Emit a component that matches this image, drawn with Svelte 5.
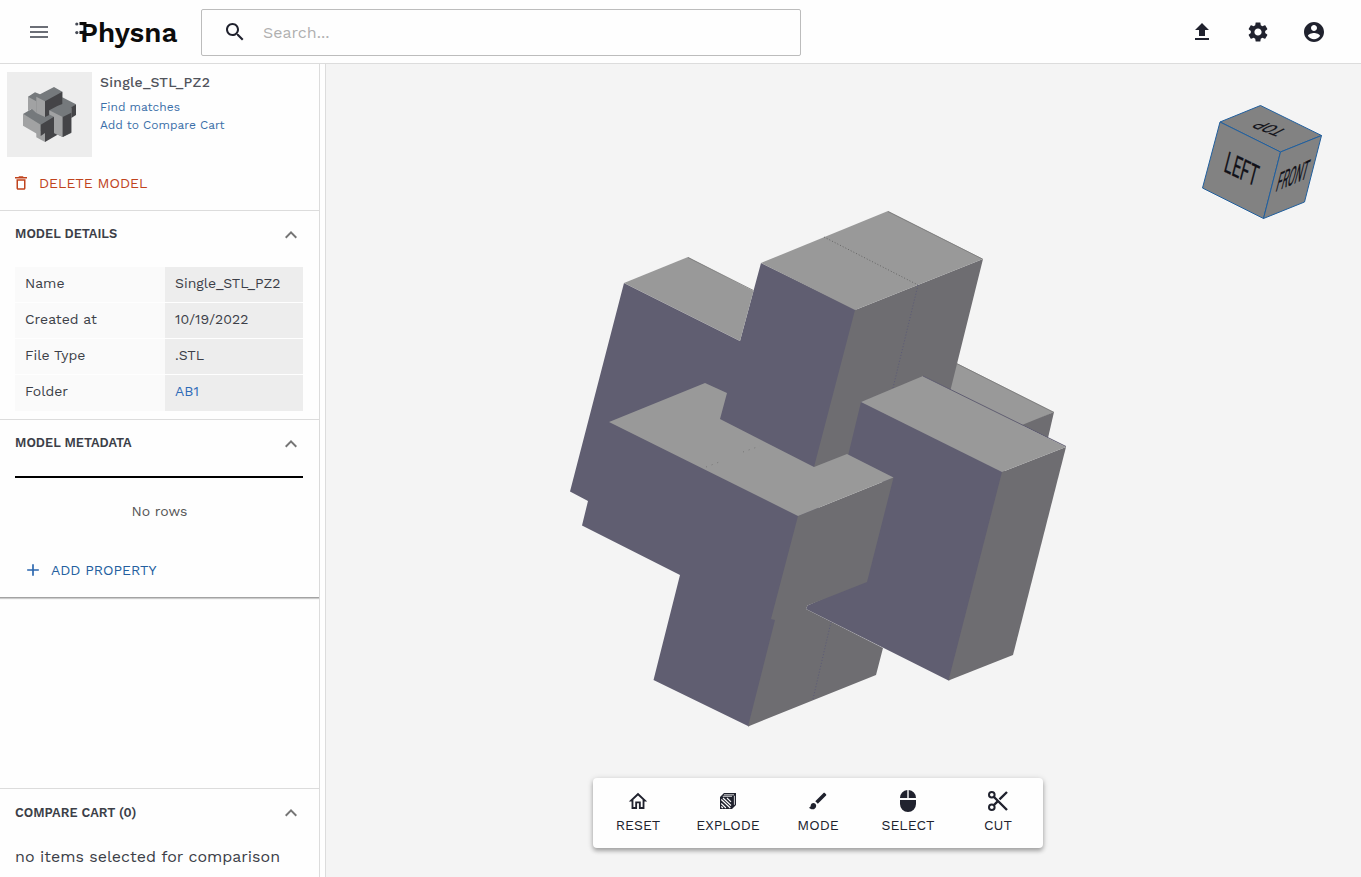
<script>
  const details = [
    { label: 'Name', value: 'Single_STL_PZ2' },
    { label: 'Created at', value: '10/19/2022' },
    { label: 'File Type', value: '.STL' },
    { label: 'Folder', value: 'AB1', link: true }
  ];
  const tools = ['RESET', 'EXPLODE', 'MODE', 'SELECT', 'CUT'];
</script>

{#snippet chevron()}
  <svg class="chevron" width="24" height="24" viewBox="0 0 24 24"><path fill="#757575" d="M12 8l-6 6 1.41 1.41L12 10.83l4.59 4.58L18 14z" /></svg>
{/snippet}

{#snippet toolIcon(name)}
  <svg class="tool-icon" width="24" height="24" viewBox="0 0 24 24" fill="#20222e">
    {#if name === 'RESET'}
      <g transform="translate(.96 1) scale(.92 .95)"><path d="M12 5.69l5 4.5V18h-2v-6H9v6H7v-7.81l5-4.5M12 3L2 12h3v8h6v-6h2v6h6v-8h3L12 3z" /></g>
    {:else if name === 'EXPLODE'}
      <path d="M4 8l4-4h12v12l-4 4H4z" />
      <path d="M8 5.8h10M6.8 7.3h9.2M18.4 6.8v9" stroke="#fff" stroke-width=".8" fill="none" />
      <path d="M5.3 10.5l9 8.5M5.3 14.5l4.6 4.5M5.3 17.5l1.6 1.5M7 9l8 7.5M11 9l4 3.8" stroke="#fff" stroke-width="1.1" fill="none" />
    {:else if name === 'MODE'}
      <g transform="translate(1 1) scale(.92)"><path d="M7 14c-1.66 0-3 1.34-3 3 0 1.31-1.16 2-2 2 .92 1.22 2.49 2 4 2 2.21 0 4-1.79 4-4 0-1.66-1.34-3-3-3zM20.71 4.63l-1.34-1.34c-.39-.39-1.02-.39-1.41 0L9 12.25 11.75 15l8.96-8.96c.39-.39.39-1.02 0-1.41z" /></g>
    {:else if name === 'SELECT'}
      <path d="M11.3 1.1A7.8 7.8 0 0 0 4 8.9h7.3zM12.7 1.1A7.8 7.8 0 0 1 20 8.9h-7.3zM4 11h16v4a8 8 0 0 1-16 0z" />
    {:else}
      <g fill="none" stroke="#20222e"><circle cx="5.8" cy="5.8" r="2.8" stroke-width="2" /><circle cx="5.8" cy="18.2" r="2.8" stroke-width="2" /><path d="M8 8L21 21M8 16l3.4-3.4M13.5 10.4L21 3" stroke-width="2.4" /></g>
    {/if}
  </svg>
{/snippet}

<div class="app">
  <header>
    <svg class="menu" width="24" height="24" viewBox="0 0 24 24"><path fill="#6b6e76" d="M3 18h18v-2H3v2zm0-5h18v-2H3v2zm0-7v2h18V6H3z" /></svg>
    <svg class="logo" width="106" height="34" viewBox="74 16 106 34" fill="#0c0c0c">
      <text x="80" y="41.500" font-size="28" font-weight="600" textLength="97.500" lengthAdjust="spacingAndGlyphs">Physna</text>
      <path d="M79.500 22h7v3.300h-7zM79.500 30.700h7v3.300h-7z" />
      <path fill="#fefefe" d="M79 25.300h4.400v5.400H79z" />
      <circle cx="76.800" cy="24" r="1.600" fill="#454954" /><circle cx="76.800" cy="32.600" r="1.600" fill="#454954" />
    </svg>
    <div class="search">
      <svg width="24" height="24" viewBox="0 0 24 24"><path fill="#20222e" d="M15.5 14h-.79l-.28-.27C15.41 12.59 16 11.11 16 9.5 16 5.91 13.09 3 9.5 3S3 5.91 3 9.5 5.91 16 9.5 16c1.61 0 3.09-.59 4.23-1.57l.27.28v.79l5 4.99L20.49 19l-4.99-5zm-6 0C7.01 14 5 11.99 5 9.5S7.01 5 9.5 5 14 7.01 14 9.5 11.99 14 9.5 14z" /></svg>
      <span>Search...</span>
    </div>
    <nav>
      <svg width="24" height="24" viewBox="0 0 24 24"><path fill="#20222e" d="M5 20h14v-2H5v2zm0-10h4v6h6v-6h4l-7-7-7 7z" /></svg>
      <svg width="24" height="24" viewBox="0 0 24 24"><path fill="#20222e" d="M19.14 12.94c.04-.3.06-.61.06-.94 0-.32-.02-.64-.07-.94l2.03-1.58c.18-.14.23-.41.12-.61l-1.92-3.32c-.12-.22-.37-.29-.59-.22l-2.39.96c-.5-.38-1.03-.7-1.62-.94l-.36-2.54c-.04-.24-.24-.41-.48-.41h-3.84c-.24 0-.43.17-.47.41l-.36 2.54c-.59.24-1.13.57-1.62.94l-2.39-.96c-.22-.08-.47 0-.59.22L2.74 8.87c-.12.21-.08.47.12.61l2.03 1.58c-.05.3-.09.63-.09.94s.02.64.07.94l-2.03 1.58c-.18.14-.23.41-.12.61l1.92 3.32c.12.22.37.29.59.22l2.39-.96c.5.38 1.03.7 1.62.94l.36 2.54c.05.24.24.41.48.41h3.84c.24 0 .44-.17.47-.41l.36-2.54c.59-.24 1.13-.56 1.62-.94l2.39.96c.22.08.47 0 .59-.22l1.92-3.32c.12-.22.07-.47-.12-.61l-2.01-1.58zM12 15.6c-1.98 0-3.6-1.62-3.6-3.6s1.62-3.6 3.6-3.6 3.6 1.62 3.6 3.6-1.62 3.6-3.6 3.6z" /></svg>
      <svg width="24" height="24" viewBox="0 0 24 24"><path fill="#20222e" d="M12 2C6.48 2 2 6.48 2 12s4.48 10 10 10 10-4.48 10-10S17.52 2 12 2zm0 3c1.66 0 3 1.34 3 3s-1.34 3-3 3-3-1.34-3-3 1.34-3 3-3zm0 14.2c-2.5 0-4.71-1.28-6-3.22.03-1.99 4-3.08 6-3.08 1.99 0 5.97 1.09 6 3.08-1.29 1.94-3.5 3.22-6 3.22z" /></svg>
    </nav>
  </header>

  <div class="body">
    <aside>
      <section class="summary">
        <div class="card">
          <svg class="thumb" width="85" height="85" viewBox="7 72 85 85">
            <path fill="#75797c" d="M28 96.700L35 92.300 40 94.300 54 87 62.300 91.700V97.300L76 104.300 71.300 108 71.300 133 62.700 137 54 133 45 134 40.700 135 23 114 32 108.700 28 105z" />
            <path fill="#a1a2a3" d="M28 96.700L36.300 101.300V113L31.700 108.700 28 111.300z" />
            <path fill="#a1a2a3" d="M36.300 96.700L45 101.300V117L36.300 113z" />
            <path fill="#444447" d="M45 101.300L62.300 91.700V104L57.300 106 49.300 110.300V115L45 117z" />
            <path fill="#444447" d="M76 104.300V115L71.300 118V107.300z" />
            <path fill="#a1a2a3" d="M36.300 133L45 129V142L36.300 137.300z" />
            <path fill="#444447" d="M45 130L54 125V133L57.500 134.700 45 142z" />
            <path fill="#a1a2a3" d="M23 113.700L40.700 124.700V136L23 125.700z" />
            <path fill="#444447" d="M40.700 124.700L54 116.700V127L45 131.500V133L40.700 136z" />
            <path fill="#a1a2a3" d="M49.300 110.300L62.700 117V137L54 132.700V116.700L49.300 114.500z" />
            <path fill="#444447" d="M62.700 117L71.300 112.700V132.500L62.700 137z" />
          </svg>
          <div class="card-text">
            <h1>Single_STL_PZ2</h1>
            <a class="find">Find matches</a>
            <a class="add">Add to Compare Cart</a>
          </div>
        </div>
        <button class="delete">
          <svg width="18" height="18" viewBox="0 0 24 24"><path fill="#c0431d" d="M6 19c0 1.100.9 2 2 2h8c1.100 0 2-.9 2-2V7H6v12zM8 9h8v10H8V9zm7.500-5l-1-1h-5l-1 1H4v2h16V4z" /></svg>
          <span>DELETE MODEL</span>
        </button>
      </section>

      <section class="details">
        <div class="head"><h2>MODEL DETAILS</h2>{@render chevron()}</div>
        <dl>
          {#each details as d}
            <div class="row"><dt>{d.label}</dt><dd class:link={d.link}>{d.value}</dd></div>
          {/each}
        </dl>
      </section>

      <section class="metadata">
        <div class="head"><h2>MODEL METADATA</h2>{@render chevron()}</div>
        <div class="rule"></div>
        <p class="none">No rows</p>
        <button class="add-prop">
          <svg width="20" height="20" viewBox="0 0 24 24"><path fill="#2a66ae" d="M19 13h-6v6h-2v-6H5v-2h6V5h2v6h6v2z" /></svg>
          <span>ADD PROPERTY</span>
        </button>
      </section>

      <section class="cart">
        <div class="head"><h2>COMPARE CART (0)</h2>{@render chevron()}</div>
        <p>no items selected for comparison</p>
      </section>
    </aside>

    <main>
      <svg class="scene" width="1035" height="813" viewBox="326 64 1035 813">
        <g class="model">
          <path fill="#605e71" d="M624 283L740 341 761 263 857 310 832 467 775 640 749 726.500 653.500 680 680 575 582 525.500 588 501 570 491.500z" />
          <path fill="#999" d="M624 283L688 257 753.500 291 740 341z" />
          <path fill="#999" d="M956.500 363L1054 412 1023 426 949 391z" />
          <path fill="#6e6d71" d="M1054 412L1048 438 1022 425z" />
          <path fill="#6e6d71" d="M855 310L983 259 950 392 923 380 864 404 850 458 814 467z" />
          <path fill="#999" d="M761 263L888 211 983 259 855 310z" />
          <path fill="#605e71" d="M861 402L925 378 1006 472 950 680 948.500 680.500 806 609 807.500 605.500 860 582 886 484 847 460z" />
          <path fill="#6e6d71" d="M798 516L893.500 477.500 867 582 807.500 605.500 806 609 883 648 876 675 748 726.500 775 620 771 619z" />
          <path fill="#999" d="M609 422L705 383 727 393 720 419 814 467 847 454 893.500 477.500 798 516z" />
          <path fill="#6e6d71" d="M1002 472L1066 447 1013 655 948.500 680.500z" />
          <path fill="#999" d="M861 402L923 376 1066 447 1002 472z" />
          <path class="silhouette" d="M688 257.500L753.500 290.500M888 211.500L982.500 259M956.500 363.500L1054 412.500" />
          <path class="edge" d="M824 237L918 285" />
          <path class="edge violet" d="M918 285L893 388M831 622L813 699" />
          <path class="edge faint" d="M706 467L722 461M743 452L760 446" />
          <path fill="none" stroke="#605e71" d="M923 376L1066 446.500" />
        </g>
        <g stroke="#205f9e" stroke-linejoin="round" fill="#828282">
          <path d="M1220 122L1260.500 105.500 1321.500 135.500 1280.500 152z" />
          <path d="M1220 122L1280.500 152 1263.500 218.500 1202.500 188z" />
          <path d="M1280.500 152L1321.500 135.500 1304.500 202 1263.500 218.500z" />
        </g>
        <g class="cube-text">
          <text font-size="28" textLength="36" lengthAdjust="spacingAndGlyphs" transform="matrix(.9 .43 -.26 1 1223 171)">LEFT</text>
          <text font-size="27" textLength="34" lengthAdjust="spacingAndGlyphs" transform="matrix(.92 -.4 -.26 1 1275 192)">FRONT</text>
          <text font-size="20" textLength="29" lengthAdjust="spacingAndGlyphs" transform="matrix(-.88 -.34 .84 -.42 1288 130.500)">TOP</text>
        </g>
      </svg>
      <div class="toolbar">
        {#each tools as t}
          <div class="tool">{@render toolIcon(t)}<span>{t}</span></div>
        {/each}
      </div>
    </main>
  </div>
</div>

<style>
  :global(body) { margin: 0; background: #fefefe; }
  .app { width: 1361px; height: 877px; display: flex; flex-direction: column; overflow: hidden; background: #fefefe; color: #3c3f48; font-family: "Work Sans", Inter, sans-serif; }
  svg { display: block; flex: none; }
  h1, h2, p, dl, dd, dt { margin: 0; }
  button { border: 0; background: none; padding: 0; font: inherit; display: flex; align-items: center; }
  header { height: 63px; flex: none; border-bottom: 1px solid #dcdcdc; display: flex; align-items: center; }
  .menu { margin-left: 27px; }
  .logo { margin: 3px 0 0 23px; overflow: visible; }
  .search { box-sizing: border-box; width: 600px; height: 47px; margin: 2px 0 0 21px; border: 1px solid #bcbcbc; border-radius: 2px; display: flex; align-items: center; padding-left: 21px; }
  .search svg { margin-top: -1px; }
  .search span { margin-left: 16px; font-size: 16px; color: #b0b0b0; }
  nav { margin: 1px 35px 0 auto; display: flex; gap: 32px; }
  .body { flex: 1; display: flex; min-height: 0; }
  aside { width: 319px; flex: none; display: flex; flex-direction: column; border-right: 1px solid #dcdcdc; margin-right: 5px; }
  main { flex: 1; border-left: 1px solid #dcdcdc; background: #f4f4f4; position: relative; overflow: hidden; }
  .summary { height: 146px; border-bottom: 1px solid #dcdcdc; }
  .card { display: flex; padding: 8px 0 0 7px; }
  .thumb { background: #ededed; }
  .card-text { margin-left: 8px; display: flex; flex-direction: column; }
  h1 { font-size: 14px; line-height: 20px; font-weight: 500; color: #51545c; letter-spacing: .25px; }
  .card-text a { font-size: 12px; line-height: 18px; color: #3a6ea8; }
  .find { margin-top: 6px; }
  .delete { margin: 16px 0 0 12px; color: #c0431d; font-size: 14px; height: 20px; }
  .delete span { margin-left: 9px; }
  .head { display: flex; justify-content: space-between; align-items: center; height: 24px; padding: 0 16px 0 15px; }
  h2 { font-size: 12.8px; font-weight: 600; color: #3c3f48; }
  .chevron { margin-top: 2px; }
  .details { height: 208px; border-bottom: 1px solid #dcdcdc; }
  .details .head, .metadata .head { padding-top: 11px; }
  .details h2, .metadata h2 { margin-bottom: 2px; }
  dl { margin: 21px 16px 0 15px; }
  .row { display: flex; height: 35px; margin-bottom: 1px; font-size: 14px; line-height: 33px; }
  .row:last-child { height: 36px; margin-bottom: 0; }
  dt { width: 140px; padding-left: 10px; background: #fafafa; }
  dd { flex: 1; padding-left: 10px; background: #ededed; }
  dd.link { color: #2d6bb8; }
  .metadata { height: 177px; border-bottom: 1px solid #a3a3a3; box-shadow: 0 1px 1px #ccc; }
  .rule { height: 2px; margin: 21px 16px 0 15px; background: #000; }
  .none { font-size: 14px; line-height: 20px; text-align: center; margin-top: 23px; color: #555; }
  .add-prop { margin: 39px 0 0 23px; height: 20px; font-size: 14px; color: #245f9f; }
  .add-prop span { margin-left: 8px; }
  .cart { margin-top: auto; height: 88px; border-top: 1px solid #dcdcdc; }
  .cart .head { padding-top: 11px; }
  .cart p { margin: 22px 0 0 15px; font-size: 16px; line-height: 22px; white-space: nowrap; }
  .scene { position: absolute; left: 0; top: 0; }
  .silhouette { fill: none; stroke: #777; stroke-width: .8; }
  .edge { fill: none; stroke: #666; stroke-dasharray: 1 2; }
  .violet { stroke: #5b5a77; }
  .faint { stroke: #777; stroke-dasharray: 1 5; }
  .cube-text { font-family: Roboto, sans-serif; fill: #111118; stroke: #111118; stroke-width: .3; }
  .toolbar { position: absolute; left: 267px; top: 714px; width: 450px; height: 70px; box-sizing: border-box; background: #fefefe; border-radius: 4px; display: grid; grid-template-columns: repeat(5, 90px); box-shadow: 0 3px 4px rgba(0,0,0,.26), 0 1px 6px rgba(0,0,0,.16); }
  .tool { display: flex; flex-direction: column; align-items: center; padding-top: 11px; font-size: 14px; color: #20222e; }
  .tool span { line-height: 18px; margin-top: 3px; }
</style>
